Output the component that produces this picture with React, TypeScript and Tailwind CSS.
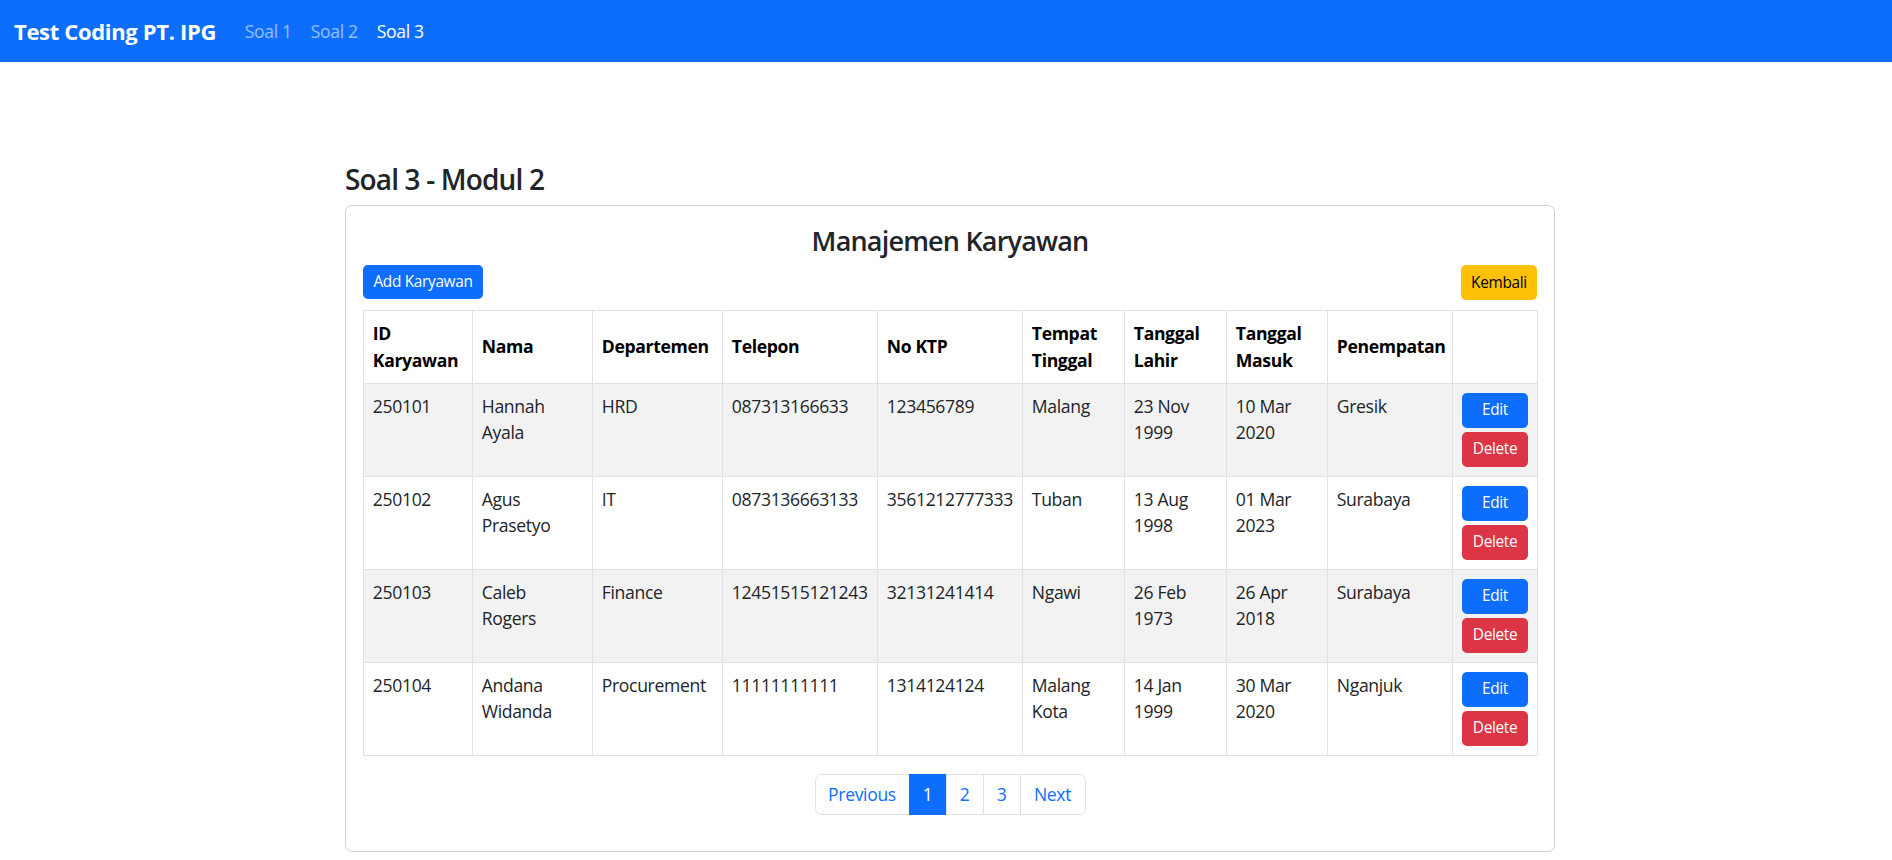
import React from "react";

const rows = [
  { id: "250101", nama: "Hannah Ayala", dept: "HRD", tel: "087313166633", ktp: "123456789", tempat: "Malang", lahir: "23 Nov 1999", masuk: "10 Mar 2020", pen: "Gresik" },
  { id: "250102", nama: "Agus Prasetyo", dept: "IT", tel: "0873136663133", ktp: "3561212777333", tempat: "Tuban", lahir: "13 Aug 1998", masuk: "01 Mar 2023", pen: "Surabaya" },
  { id: "250103", nama: "Caleb Rogers", dept: "Finance", tel: "12451515121243", ktp: "32131241414", tempat: "Ngawi", lahir: "26 Feb 1973", masuk: "26 Apr 2018", pen: "Surabaya" },
  { id: "250104", nama: "Andana Widanda", dept: "Procurement", tel: "11111111111", ktp: "1314124124", tempat: "Malang Kota", lahir: "14 Jan 1999", masuk: "30 Mar 2020", pen: "Nganjuk" },
];

const th = "border border-[#dee2e6] px-[8.8px] py-[8.8px] text-left align-middle font-bold text-black";
const td = "border border-[#dee2e6] px-[8.8px] py-[9px] align-top";

export default function App() {
  return (
    <div className="min-h-screen bg-white text-[#212529] font-['Open_Sans',sans-serif]">
      <nav className="h-[62px] bg-[#0d6efd] flex items-center pl-[14px]">
        <div className="w-[222px] text-white font-bold text-[22px] leading-[33px] tracking-[-0.015em]">Test Coding PT. IPG</div>
        <a className="w-[66px] pl-[8.8px] text-[17.6px] leading-[26px] tracking-[-0.02em] text-white/55">Soal 1</a>
        <a className="w-[66px] pl-[8.8px] text-[17.6px] leading-[26px] tracking-[-0.02em] text-white/55">Soal 2</a>
        <a className="w-[66px] pl-[8.8px] text-[17.6px] leading-[26px] tracking-[-0.02em] text-white">Soal 3</a>
      </nav>

      <main className="ml-[345px] w-[1210px] pt-[100px]">
        <h3 className="text-[28px] leading-[34px] font-semibold tracking-[-0.03em] mb-[9px]">Soal 3 - Modul 2</h3>
        <div className="border border-black/[0.175] rounded-[7px] px-[17px] pt-[17.6px] pb-[17.6px]">
          <h3 className="text-center text-[27px] leading-[33px] font-semibold tracking-[-0.03em]">Manajemen Karyawan</h3>
          <div className="flex justify-between mt-[8px] mb-[10px] tracking-[-0.02em]">
            <button className="w-[120px] h-[34px] rounded-[5px] bg-[#0d6efd] text-white text-[15.4px] flex items-center justify-center">
              Add Karyawan
            </button>
            <button className="w-[76px] h-[35px] rounded-[5px] bg-[#ffc107] text-black text-[15.4px] flex items-center justify-center">
              Kembali
            </button>
          </div>

          <table className="table-fixed border-collapse w-[1174px] text-[17.6px] leading-[26.4px] tracking-[-0.02em]">
            <colgroup>
              <col className="w-[109px]" />
              <col className="w-[120px]" />
              <col className="w-[130px]" />
              <col className="w-[155px]" />
              <col className="w-[145px]" />
              <col className="w-[102px]" />
              <col className="w-[102px]" />
              <col className="w-[101px]" />
              <col className="w-[125px]" />
              <col className="w-[85px]" />
            </colgroup>
            <thead>
              <tr className="h-[73px]">
                <th className={th}>ID Karyawan</th>
                <th className={th}>Nama</th>
                <th className={th}>Departemen</th>
                <th className={th}>Telepon</th>
                <th className={th}>No KTP</th>
                <th className={th}>Tempat Tinggal</th>
                <th className={th}>Tanggal Lahir</th>
                <th className={th}>Tanggal Masuk</th>
                <th className={th}>Penempatan</th>
                <th className={th}></th>
              </tr>
            </thead>
            <tbody>
              {rows.map((r, i) => (
                <tr key={r.id} className={i % 2 === 0 ? "bg-[#f2f2f2]" : "bg-white"}>
                  <td className={td}>{r.id}</td>
                  <td className={td}>{r.nama}</td>
                  <td className={td}>{r.dept}</td>
                  <td className={td}>{r.tel}</td>
                  <td className={td}>{r.ktp}</td>
                  <td className={td}>{r.tempat}</td>
                  <td className={td}>{r.lahir}</td>
                  <td className={td}>{r.masuk}</td>
                  <td className={td}>{r.pen}</td>
                  <td className={td}>
                    <div className="flex flex-col gap-[4px]">
                      <button className="h-[35px] w-full rounded-[5px] bg-[#0d6efd] text-white text-[15.4px] flex items-center justify-center">
                        Edit
                      </button>
                      <button className="h-[35px] w-full rounded-[5px] bg-[#dc3545] text-white text-[15.4px] flex items-center justify-center">
                        Delete
                      </button>
                    </div>
                  </td>
                </tr>
              ))}
            </tbody>
          </table>

          <div className="flex justify-center mt-[18px] mb-[19px]">
            <div className="flex h-[41px] text-[17.6px] tracking-[-0.02em] text-[#0d6efd]">
              <span className="w-[95px] flex items-center justify-center border border-[#dee2e6] rounded-l-[6.6px]">Previous</span>
              <span className="w-[38px] flex items-center justify-center bg-[#0d6efd] border border-[#0d6efd] text-white -ml-px">1</span>
              <span className="w-[38px] flex items-center justify-center border border-[#dee2e6] -ml-px">2</span>
              <span className="w-[38px] flex items-center justify-center border border-[#dee2e6] -ml-px">3</span>
              <span className="w-[66px] flex items-center justify-center border border-[#dee2e6] rounded-r-[6.6px] -ml-px">Next</span>
            </div>
          </div>
        </div>
      </main>
    </div>
  );
}
